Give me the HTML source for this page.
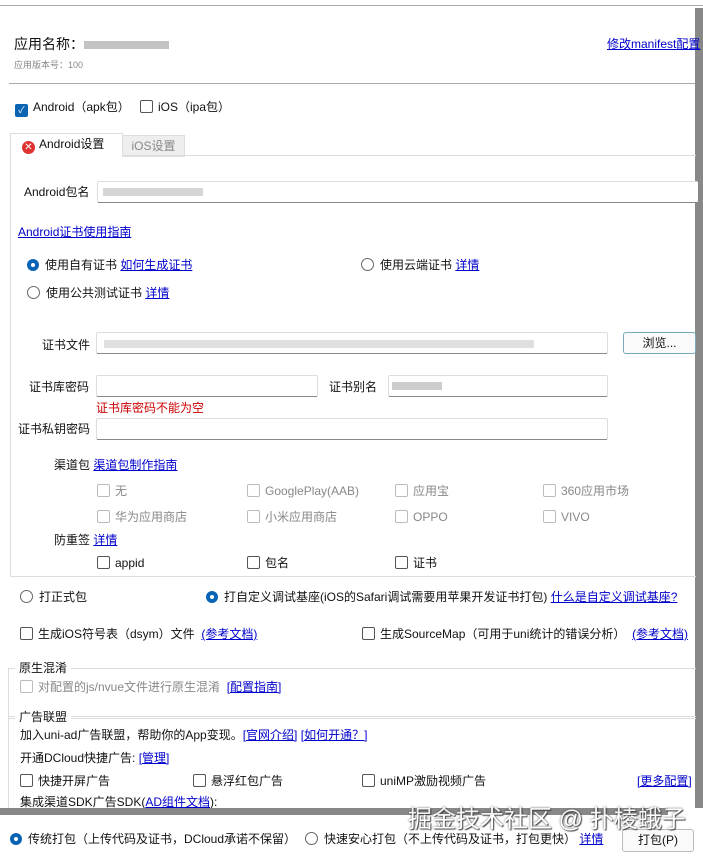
<html><head><style>
body{margin:0;width:703px;height:860px;background:#fff;font-family:"Liberation Sans","Noto Sans CJK SC",sans-serif;font-size:12px;color:#111;position:relative;overflow:hidden}
.a{position:absolute;white-space:nowrap;line-height:14px}
a,.l{color:#0000cc;text-decoration:underline}
.cb{display:inline-block;width:11px;height:11px;border:1px solid #555;border-radius:2px;vertical-align:-2px;margin-right:5px;background:#fff}
.cb.d{border-color:#bbb}
.g{color:#888}
.rd{display:inline-block;width:11px;height:11px;border:1px solid #666;border-radius:50%;vertical-align:-2px;margin-right:6px;box-sizing:content-box}
.rd.on{border:4px solid #0a64b4;width:4px;height:4px;background:#fff}
.in{position:absolute;border:1px solid #ddd;border-bottom:1px solid #888;height:20px;background:#fff;border-radius:2px}
.hl{position:absolute;height:1px;background:#aaa}
.blur{position:absolute;background:#ccc;height:8px}
</style></head><body>
<div class="hl" style="left:0;top:5px;width:703px"></div>
<div class="a" style="left:695px;top:8px;width:8px;height:800px;background:#888"></div>
<div class="a" style="left:14px;top:37px;font-size:14px">应用名称：</div>
<div class="blur" style="left:84px;top:41px;width:85px;background:#aaa;opacity:.7"></div>
<div class="a" style="left:14px;top:58px;font-size:9px;color:#888">应用版本号：100</div>
<div class="a l" style="left:607px;top:37px;font-size:12px">修改manifest配置</div>
<div class="hl" style="left:9px;top:83px;width:686px"></div>
<div class="a" style="left:15px;top:100px"><span class="cb" style="background:#0a64b4;border-color:#0a64b4;color:#fff;font-size:9px;line-height:11px;text-align:center">✓</span>Android（apk包）</div>
<div class="a" style="left:140px;top:100px"><span class="cb"></span>iOS（ipa包）</div>
<div class="a" style="left:10px;top:133px;width:111px;height:23px;border:1px solid #ddd;border-bottom:none;background:#fff;z-index:2"></div>
<div class="a" style="left:22px;top:137px;z-index:3"><span style="display:inline-block;width:13px;height:13px;border-radius:50%;background:#d33;color:#fff;font-size:10px;line-height:13px;text-align:center;vertical-align:-2px;margin-right:4px">✕</span>Android设置</div>
<div class="a" style="left:122px;top:135px;width:61px;height:20px;border:1px solid #ddd;background:#eee;color:#888;text-align:center;line-height:20px">iOS设置</div>
<div class="a" style="left:10px;top:155px;width:685px;height:420px;border:1px solid #ddd;border-right:none"></div>
<div class="a" style="left:24px;top:185px">Android包名</div>
<div class="in" style="left:97px;top:181px;width:600px;border-right:none"></div>
<div class="blur" style="left:103px;top:188px;width:100px;background:#bbb;opacity:.6"></div>
<div class="a l" style="left:18px;top:225px">Android证书使用指南</div>
<div class="a" style="left:27px;top:258px"><span class="rd on"></span>使用自有证书 <span class="l">如何生成证书</span></div>
<div class="a" style="left:361px;top:258px"><span class="rd"></span>使用云端证书 <span class="l">详情</span></div>
<div class="a" style="left:27px;top:286px"><span class="rd"></span>使用公共测试证书 <span class="l">详情</span></div>
<div class="a" style="left:42px;top:338px">证书文件</div>
<div class="in" style="left:96px;top:332px;width:510px"></div>
<div class="blur" style="left:104px;top:340px;width:430px;background:#ccc;opacity:.6"></div>
<div class="a" style="left:623px;top:332px;width:71px;height:20px;border:1px solid #7ab;border-radius:3px;text-align:center;line-height:20px;background:#fafafa">浏览...</div>
<div class="a" style="left:29px;top:380px">证书库密码</div>
<div class="in" style="left:96px;top:375px;width:220px"></div>
<div class="a" style="left:329px;top:380px">证书别名</div>
<div class="in" style="left:388px;top:375px;width:218px"></div>
<div class="blur" style="left:392px;top:382px;width:50px;background:#aaa;opacity:.6"></div>
<div class="a" style="left:96px;top:401px;color:#c00">证书库密码不能为空</div>
<div class="a" style="left:18px;top:422px">证书私钥密码</div>
<div class="in" style="left:96px;top:418px;width:510px"></div>
<div class="a" style="left:54px;top:458px">渠道包 <span class="l">渠道包制作指南</span></div>
<div class="a g" style="left:97px;top:484px"><span class="cb d"></span>无</div>
<div class="a g" style="left:247px;top:484px"><span class="cb d"></span>GooglePlay(AAB)</div>
<div class="a g" style="left:395px;top:484px"><span class="cb d"></span>应用宝</div>
<div class="a g" style="left:543px;top:484px"><span class="cb d"></span>360应用市场</div>
<div class="a g" style="left:97px;top:510px"><span class="cb d"></span>华为应用商店</div>
<div class="a g" style="left:247px;top:510px"><span class="cb d"></span>小米应用商店</div>
<div class="a g" style="left:395px;top:510px"><span class="cb d"></span>OPPO</div>
<div class="a g" style="left:543px;top:510px"><span class="cb d"></span>VIVO</div>
<div class="a" style="left:54px;top:533px">防重签 <span class="l">详情</span></div>
<div class="a" style="left:97px;top:556px"><span class="cb"></span>appid</div>
<div class="a" style="left:247px;top:556px"><span class="cb"></span>包名</div>
<div class="a" style="left:395px;top:556px"><span class="cb"></span>证书</div>
<div class="a" style="left:20px;top:590px"><span class="rd"></span>打正式包</div>
<div class="a" style="left:206px;top:590px"><span class="rd on"></span>打自定义调试基座(iOS的Safari调试需要用苹果开发证书打包) <span class="l">什么是自定义调试基座?</span></div>
<div class="a" style="left:20px;top:627px"><span class="cb"></span>生成iOS符号表（dsym）文件 &nbsp;<span class="l">(参考文档)</span></div>
<div class="a" style="left:362px;top:627px"><span class="cb"></span>生成SourceMap（可用于uni统计的错误分析） &nbsp;<span class="l">(参考文档)</span></div>
<div class="a" style="left:8px;top:668px;width:687px;height:49px;border:1px solid #ddd;border-right:none"></div>
<div class="a" style="left:15px;top:661px;background:#fff;padding:0 4px">原生混淆</div>
<div class="a g" style="left:20px;top:680px"><span class="cb d"></span>对配置的js/nvue文件进行原生混淆 &nbsp;<span class="l">[配置指南]</span></div>
<div class="a" style="left:8px;top:716px;width:687px;height:100px;border:1px solid #ddd;border-right:none"></div>
<div class="a" style="left:15px;top:710px;background:#fff;padding:0 4px">广告联盟</div>
<div class="a" style="left:20px;top:728px">加入uni-ad广告联盟，帮助你的App变现。<span class="l">[官网介绍]</span> <span class="l">[如何开通？]</span></div>
<div class="a" style="left:20px;top:751px">开通DCloud快捷广告: <span class="l">[管理]</span></div>
<div class="a" style="left:20px;top:774px"><span class="cb"></span>快捷开屏广告</div>
<div class="a" style="left:193px;top:774px"><span class="cb"></span>悬浮红包广告</div>
<div class="a" style="left:362px;top:774px"><span class="cb"></span>uniMP激励视频广告</div>
<div class="a l" style="left:637px;top:774px">[更多配置]</div>
<div class="a" style="left:20px;top:795px">集成渠道SDK广告SDK(<span class="l">AD组件文档</span>):</div>
<div class="a" style="left:0;top:808px;width:668px;height:7px;background:#888"></div>
<div class="a" style="left:0;top:815px;width:703px;height:45px;background:#fff"></div>
<div class="a" style="left:10px;top:832px"><span class="rd on"></span>传统打包（上传代码及证书，DCloud承诺不保留）</div>
<div class="a" style="left:305px;top:832px"><span class="rd"></span>快速安心打包（不上传代码及证书，打包更快） <span class="l">详情</span></div>
<div class="a" style="left:622px;top:829px;width:70px;height:21px;border:1px solid #bbb;border-radius:3px;text-align:center;line-height:21px;background:#fafafa">打包(P)</div>
<div class="a" style="left:408px;top:805px;font-size:24px;line-height:30px;color:#fff;text-shadow:0 0 2px #444,1px 1px 1px #333;opacity:.9">掘金技术社区 @ 扑棱蛾子</div>
</body></html>
